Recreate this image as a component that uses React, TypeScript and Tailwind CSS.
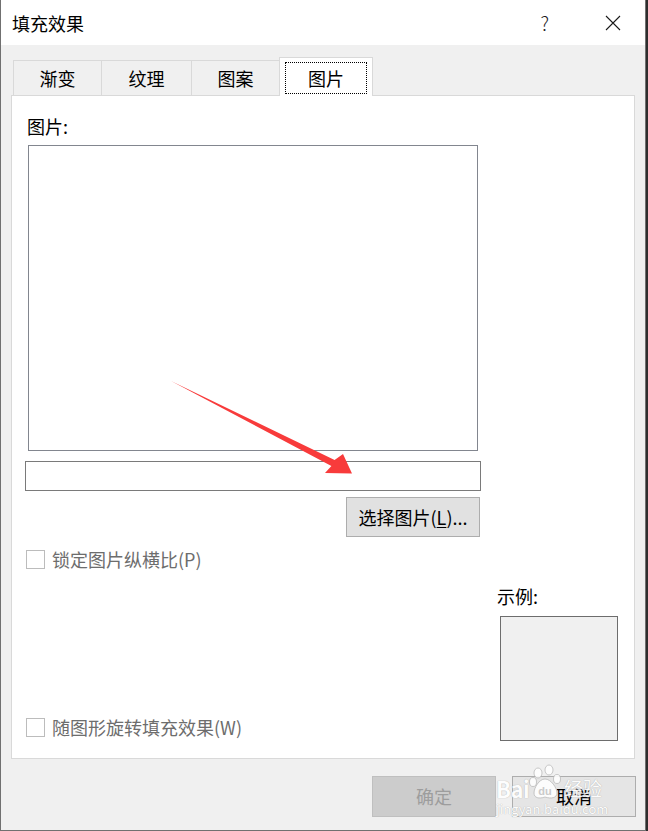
import type { ReactNode } from "react";

const FONT = "font-['Noto_Sans_CJK_SC','Noto_Sans',sans-serif]";

export default function App() {
  return (
    <div className={`relative w-[648px] h-[831px] bg-[#2e2e2e] ${FONT}`}>
      <div className="w-[646px] h-[831px] bg-[#f0f0f0] border-l border-r border-b border-[#707070] flex flex-col">
        {/* Title bar */}
        <div className="h-[45px] bg-white flex items-center pl-[11px] shrink-0">
          <span className="text-[18px] leading-6 text-black flex-1">填充效果</span>
          <span className="text-[19px] leading-6 text-[#1a1a1a] font-light mr-[56px]">?</span>
          <div className="mr-[24px]">
            <CloseIcon />
          </div>
        </div>

        {/* Tabs */}
        <div className="flex items-end pt-[12px] ml-[12px] h-[50px] shrink-0">
          <Tab width="w-[88px]">渐变</Tab>
          <Tab width="w-[90px]">纹理</Tab>
          <Tab width="w-[88px]">图案</Tab>
          <div className="relative z-10 -mb-px w-[94px] h-[39px] bg-white border-l border-t border-r border-[#d9d9d9] p-[4px] pb-[2px]">
            <div className="h-[32px] w-[82px] mx-auto border border-dotted border-black flex items-center justify-center text-[18px] text-black">
              图片
            </div>
          </div>
        </div>

        {/* Panel */}
        <div className="ml-[10px] w-[624px] h-[664px] bg-white border border-[#d9d9d9] flex flex-col shrink-0">
          <div className="mt-[18px] ml-[15px] text-[18px] leading-6 text-black">图片:</div>
          <div className="mt-[7px] ml-[16px] w-[450px] h-[306px] border border-[#82868f] bg-white" />
          <div className="mt-[10px] ml-[13px] w-[456px] h-[30px] border border-[#7a7a7a] bg-white" />
          <div className="mt-[6px] ml-[334px] w-[134px] h-[40px] bg-[#e1e1e1] border border-[#adadad] flex items-center justify-center text-[18px] text-black">
            选择图片(<span className="underline underline-offset-2">L</span>)...
          </div>

          <div className="mt-[13px] flex flex-1 pb-[17px]">
            <div className="flex-1 flex flex-col justify-between pl-[14px] pb-[4px]">
              <Check>锁定图片纵横比(P)</Check>
              <Check>随图形旋转填充效果(W)</Check>
            </div>
            <div className="w-[121px] mr-[16px] flex flex-col">
              <div className="mt-[34px] text-[18px] leading-6 text-black">示例:</div>
              <div className="mt-[8px] ml-[3px] w-[118px] h-[125px] bg-[#f0f0f0] border border-[#6d6d6d]" />
            </div>
          </div>
        </div>

        {/* Footer buttons */}
        <div className="mt-[17px] ml-[371px] flex gap-[16px]">
          <div className="w-[124px] h-[41px] bg-[#cccccc] border border-[#bfbfbf] flex items-center justify-center text-[18px] text-[#9d9d9d]">
            确定
          </div>
          <div className="w-[124px] h-[41px] bg-[#e5e5e5] border border-[#adadad] flex items-center justify-center text-[18px] text-black">
            取消
          </div>
        </div>
      </div>

      {/* Red arrow annotation */}
      <svg className="absolute left-0 top-0 pointer-events-none" width="648" height="831">
        <polygon
          points="171,381 334.6,459.9 343,454 352,473.5 325,473 331.4,466.1"
          fill="#f83b3b"
        />
      </svg>

      {/* Baidu jingyan watermark */}
      <div className="absolute left-[496px] top-[762px] w-[120px] pointer-events-none text-white opacity-90">
        <div className="flex items-end h-[38px]">
          <span className="text-[22px] leading-[24px] font-bold tracking-tight [text-shadow:0_0_1px_#9a9a9a]">Bai</span>
          <PawIcon />
          <span className="ml-[3px] text-[19px] leading-[24px] [text-shadow:0_0_1px_#9a9a9a]">经验</span>
        </div>
        <div className="text-[13px] leading-[16px] mt-[1px] [text-shadow:0_0_1px_#9a9a9a]">jingyan.baidu.com</div>
      </div>
    </div>
  );
}

function Tab({ width, children }: { width: string; children: ReactNode }) {
  return (
    <div
      className={`${width} h-[35px] bg-[#f0f0f0] border-l border-t border-[#d9d9d9] flex items-center justify-center text-[18px] text-black`}
    >
      {children}
    </div>
  );
}

function Check({ children }: { children: ReactNode }) {
  return (
    <div className="flex items-center h-[19px]">
      <div className="w-[19px] h-[19px] border border-[#bcbcbc] bg-white shrink-0" />
      <span className="ml-[7px] text-[18px] leading-[19px] text-[#6d6d6d] whitespace-nowrap">{children}</span>
    </div>
  );
}

function CloseIcon() {
  return (
    <svg width="16" height="16" viewBox="0 0 16 16" className="block">
      <path d="M1 1 L15 15 M15 1 L1 15" stroke="#1a1a1a" strokeWidth="1.1" fill="none" />
    </svg>
  );
}

function PawIcon() {
  return (
    <svg width="32" height="36" viewBox="0 0 32 36" className="block">
      <g fill="#ffffff" stroke="#b5b5b5" strokeWidth="0.8">
        <ellipse cx="9" cy="9" rx="4" ry="5" />
        <ellipse cx="20" cy="6" rx="4" ry="5" />
        <ellipse cx="4" cy="18" rx="3.5" ry="4.5" />
        <ellipse cx="28" cy="15" rx="3.5" ry="4.5" />
        <path d="M16 15 C10 15 5 24 5 29 C5 34 10 35 16 33 C22 35 28 34 28 29 C28 24 22 15 16 15 Z" />
      </g>
      <text x="16" y="31" textAnchor="middle" fontSize="11" fontWeight="bold" fill="#c8c8c8" fontFamily="Liberation Sans, sans-serif">
        du
      </text>
    </svg>
  );
}
